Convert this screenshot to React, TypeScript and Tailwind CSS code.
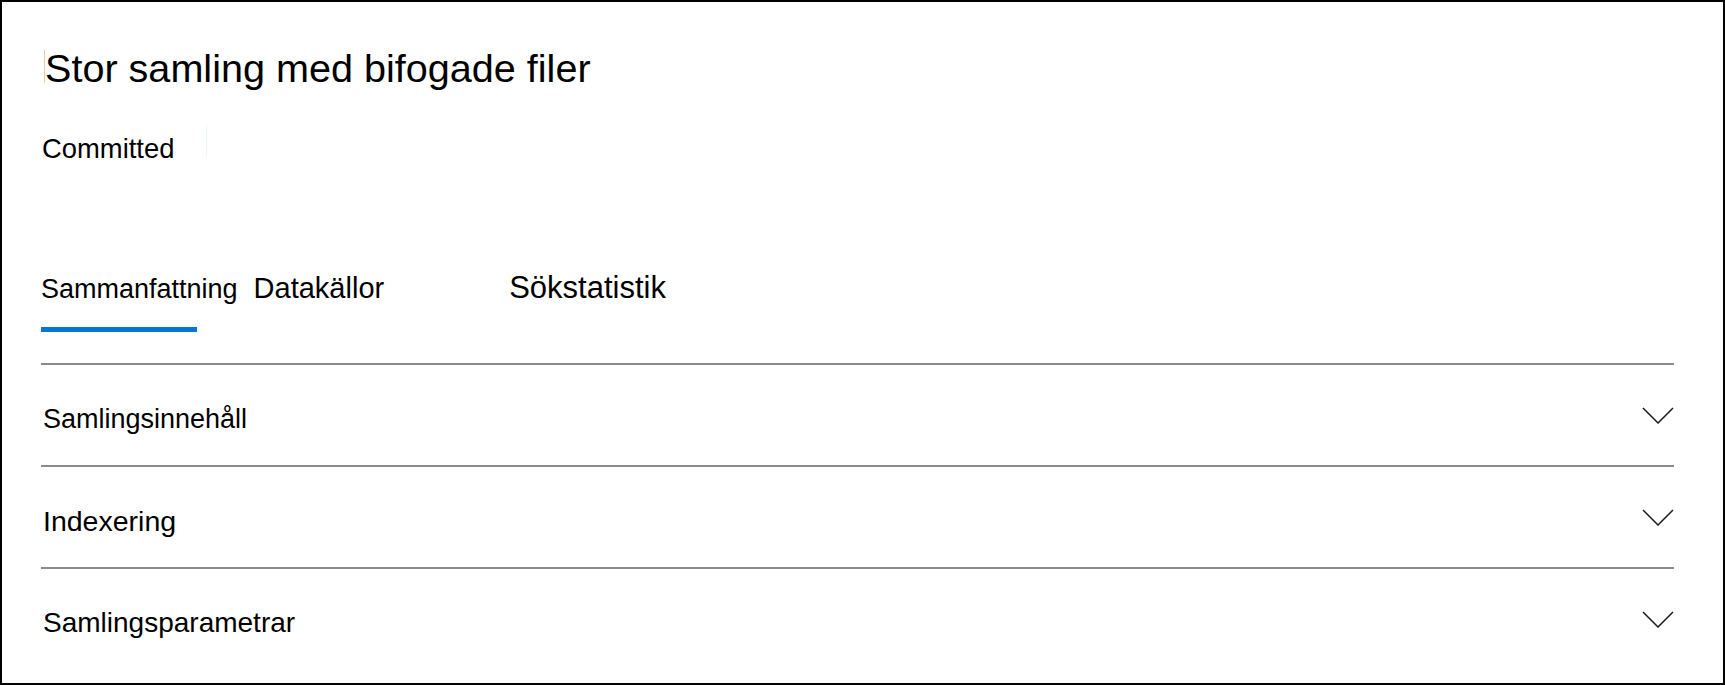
interface Section {
  title: string
  size: string
}

const sections: Section[] = [
  { title: 'Samlingsinnehåll', size: 'text-[27px]' },
  { title: 'Indexering', size: 'text-[28.5px]' },
  { title: 'Samlingsparametrar', size: 'text-[28px]' },
]

function Chevron() {
  return (
    <svg width="32" height="17" viewBox="0 0 32 17" fill="none" className="shrink-0">
      <polyline points="1,1 16,16 31,1" stroke="#1b1b1b" strokeWidth="1.5" strokeLinejoin="miter" />
    </svg>
  )
}

function App() {
  return (
    <div
      className="box-border flex h-[685px] w-[1725px] flex-col border-2 border-black bg-white pl-[39px] pr-[49px] pt-[47px] text-black"
      style={{ fontFamily: '"Liberation Sans", Arial, sans-serif' }}
    >
      <div className="flex items-start">
        <span className="ml-[3px] mt-[1px] h-[33px] w-px bg-[#f3c98f]" />
        <h1 className="text-[39.6px] font-normal leading-none">Stor samling med bifogade filer</h1>
      </div>

      <div className="mt-[46px] flex items-start pl-[1px]">
        <span className="text-[27.4px] leading-none">Committed</span>
        <span className="ml-[32px] mt-[-10px] h-[32px] w-px bg-[#eef6fa]" />
      </div>

      <div className="mt-[110px] flex h-[31px] items-baseline">
        <button className="text-[27px] leading-none">Sammanfattning</button>
        <button className="ml-[16px] text-[29px] leading-none">Datakällor</button>
        <button className="ml-[125px] text-[31px] leading-none">Sökstatistik</button>
      </div>
      <div className="mt-[24px] h-[5px] w-[156px] bg-[#0078d4]" />

      <div className="mt-[31px]">
        {sections.map((s) => (
          <div key={s.title} className="border-t-2 border-[#8a8a8a]">
            <div className="flex h-[100px] items-center justify-between">
              <span className={`${s.size} pl-[2px] pt-2 leading-none`}>{s.title}</span>
              <Chevron />
            </div>
          </div>
        ))}
      </div>
    </div>
  )
}

export default App
